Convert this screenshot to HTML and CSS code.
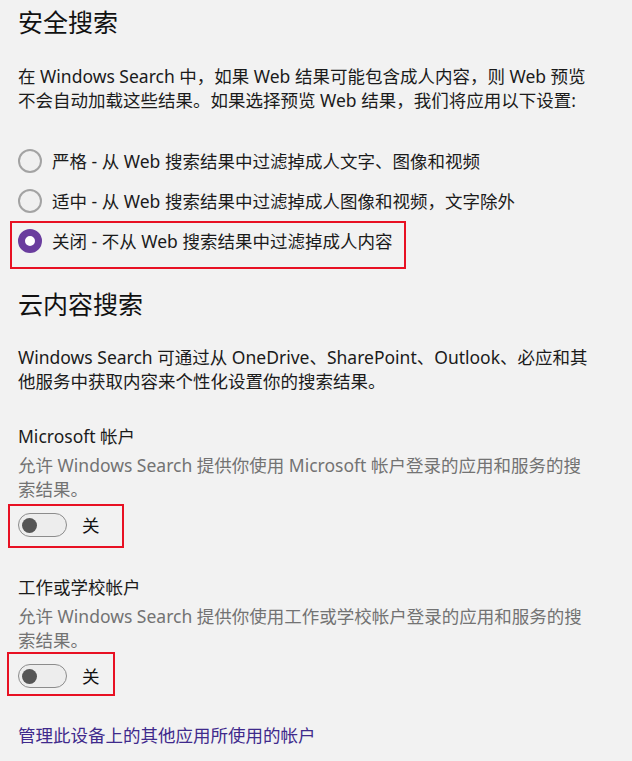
FILE: index.html
```html
<!DOCTYPE html>
<html lang="zh-CN">
<head>
<meta charset="utf-8">
<title>安全搜索</title>
<link rel="stylesheet" href="styles.css">
</head>
<body>
<main class="page">
  <h1 class="title first">安全搜索</h1>
  <p class="para para-1">在 Windows Search 中，如果 Web 结果可能包含成人内容，则 Web 预览<br>不会自动加载这些结果。如果选择预览 Web 结果，我们将应用以下设置:</p>

  <div class="radios">
    <label class="radio-row">
      <span class="radio"></span>
      <span class="radio-text">严格 - 从 Web 搜索结果中过滤掉成人文字、图像和视频</span>
    </label>
    <label class="radio-row">
      <span class="radio"></span>
      <span class="radio-text">适中 - 从 Web 搜索结果中过滤掉成人图像和视频，文字除外</span>
    </label>
    <label class="radio-row marked mark-radio">
      <span class="radio checked"></span>
      <span class="radio-text">关闭 - 不从 Web 搜索结果中过滤掉成人内容</span>
    </label>
  </div>

  <h1 class="title second">云内容搜索</h1>
  <p class="para para-2">Windows Search 可通过从 OneDrive、SharePoint、Outlook、必应和其<br>他服务中获取内容来个性化设置你的搜索结果。</p>

  <h2 class="label label-1">Microsoft 帐户</h2>
  <p class="desc">允许 Windows Search 提供你使用 Microsoft 帐户登录的应用和服务的搜<br>索结果。</p>
  <div class="toggle-row marked mark-toggle-1">
    <span class="toggle"><span class="knob"></span></span>
    <span class="toggle-text">关</span>
  </div>

  <h2 class="label label-2">工作或学校帐户</h2>
  <p class="desc">允许 Windows Search 提供你使用工作或学校帐户登录的应用和服务的搜<br>索结果。</p>
  <div class="toggle-row marked mark-toggle-2">
    <span class="toggle"><span class="knob"></span></span>
    <span class="toggle-text">关</span>
  </div>

  <a class="link" href="#">管理此设备上的其他应用所使用的帐户</a>
</main>
</body>
</html>
```

FILE: styles.css
```css
html, body {
  margin: 0;
  padding: 0;
  background: #f2f2f2;
}

body {
  font-family: "Noto Sans", "Noto Sans CJK SC", sans-serif;
  color: #1b1b1b;
  font-size: 17.5px;
  line-height: 24px;
}

.page {
  display: flex;
  flex-direction: column;
  align-items: flex-start;
  padding: 0 0 0 18px;
}

.title {
  margin: 0;
  font-size: 25px;
  font-weight: 400;
  line-height: 34px;
  color: #111;
}

.title.first {
  margin-top: 5px;
}

.title.second {
  margin-top: 26px;
}

.para {
  margin: 0;
  width: 610px;
  white-space: nowrap;
}

.para-1 {
  margin-top: 25px;
}

.para-2 {
  margin-top: 24px;
}

.radios {
  margin-top: 29px;
  display: flex;
  flex-direction: column;
}

.radio-row {
  display: flex;
  align-items: center;
  gap: 10px;
  height: 40px;
  position: relative;
}

.radio {
  width: 24px;
  height: 24px;
  box-sizing: border-box;
  border-radius: 50%;
  border: 2px solid #a3a3a3;
  background: #f0f0f0;
  flex: none;
}

.radio.checked {
  border: 7px solid #6a3d9e;
  background: #fff;
}

.marked::after {
  content: "";
  position: absolute;
  border: 2px solid #e81123;
  box-sizing: border-box;
  pointer-events: none;
}

.mark-radio::after {
  top: 0;
  left: -8px;
  width: 396px;
  height: 48px;
}

.label {
  margin: 0;
  font-size: 17.5px;
  font-weight: 400;
  line-height: 24px;
}

.label-1 {
  margin-top: 31px;
}

.label-2 {
  margin-top: 38px;
}

.desc {
  margin: 5px 0 0;
  width: 610px;
  white-space: nowrap;
  color: #737373;
}

.toggle-row {
  margin-top: 12px;
  display: flex;
  align-items: center;
  gap: 15px;
  height: 24px;
  position: relative;
}

.toggle {
  width: 49px;
  height: 24px;
  box-sizing: border-box;
  border: 1px solid #8c8c8c;
  border-radius: 12px;
  background: #ededed;
  display: flex;
  align-items: center;
  padding-left: 3px;
}

.knob {
  width: 15px;
  height: 15px;
  border-radius: 50%;
  background: #565656;
}

.toggle-text {
  color: #111;
}

.mark-toggle-1::after {
  top: -9px;
  left: -10px;
  width: 116px;
  height: 44px;
}

.mark-toggle-2::after {
  top: -12px;
  left: -11px;
  width: 108px;
  height: 44px;
}

.link {
  margin-top: 35px;
  color: #3f2a8c;
  text-decoration: none;
}
```
